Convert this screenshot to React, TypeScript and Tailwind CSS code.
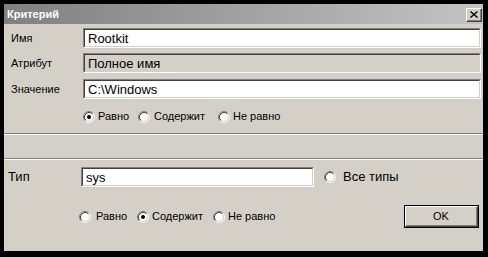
import React from "react";

const font = { fontFamily: '"Liberation Sans", Arial, sans-serif' };

function Radio({ checked }: { checked?: boolean }) {
  return (
    <svg width="12" height="12" viewBox="0 0 12 12" className="shrink-0">
      <circle cx="6" cy="6" r="4.5" fill="#fff" />
      <path d="M2.11 9.89 A5.5 5.5 0 0 1 9.89 2.11" stroke="#808080" strokeWidth="1" fill="none" />
      <path d="M9.89 2.11 A5.5 5.5 0 0 1 2.11 9.89" stroke="#ffffff" strokeWidth="1" fill="none" />
      <path d="M2.82 9.18 A4.5 4.5 0 0 1 9.18 2.82" stroke="#404040" strokeWidth="1" fill="none" />
      <path d="M9.18 2.82 A4.5 4.5 0 0 1 2.82 9.18" stroke="#d4d0c8" strokeWidth="1" fill="none" />
      {checked && <circle cx="6" cy="6" r="2" fill="#000" />}
    </svg>
  );
}

function Field({ value, gray, width }: { value: string; gray?: boolean; width: string }) {
  return (
    <div className={`${width} h-[20px] border-t border-l border-[#808080] border-b border-r border-b-white border-r-white`}>
      <div
        className={`h-full border-t border-l border-[#404040] border-b border-r border-b-[#d4d0c8] border-r-[#d4d0c8] ${gray ? "bg-[#d4d0c8]" : "bg-white"} flex items-center pl-[3px] text-[13px] text-black leading-none`}
      >
        {value}
      </div>
    </div>
  );
}

function Separator() {
  return (
    <div className="w-full">
      <div className="h-px bg-[#808080]" />
      <div className="h-px bg-white" />
    </div>
  );
}

export default function App() {
  return (
    <div className="w-[488px] h-[257px] bg-black pt-[4px] pl-[4px]" style={font}>
      <div className="w-[479px] h-[247px] bg-[#d4d0c8] flex flex-col">
        {/* Title bar */}
        <div className="h-[20px] bg-gradient-to-r from-[#808080] to-[#c4c4c4] flex items-center justify-between pl-[3px] pr-[1px]">
          <span className="text-white font-bold text-[11px] leading-none">Критерий</span>
          <div className="w-[16px] h-[14px] mt-[1px] border-t border-l border-white border-b border-r border-b-[#404040] border-r-[#404040]">
            <div className="w-full h-full bg-[#d4d0c8] border-b border-r border-[#808080] border-t-0 border-l-0 flex items-center justify-center">
              <svg width="8" height="7" viewBox="0 0 8 7">
                <path d="M0.5 0.5 L7.5 6.5 M7.5 0.5 L0.5 6.5" stroke="#000" strokeWidth="1.4" />
              </svg>
            </div>
          </div>
        </div>

        {/* Row 1 */}
        <div className="flex items-center mt-[4px] pl-[7px]">
          <div className="w-[72px] text-[11px] text-black">Имя</div>
          <Field value="Rootkit" width="w-[398px]" />
        </div>
        <div className="flex items-center mt-[5px] pl-[7px]">
          <div className="w-[72px] text-[11px] text-black">Атрибут</div>
          <Field value="Полное имя" gray width="w-[398px]" />
        </div>
        <div className="flex items-center mt-[6px] pl-[7px]">
          <div className="w-[72px] text-[11px] text-black">Значение</div>
          <Field value="C:\Windows" width="w-[398px]" />
        </div>

        {/* Radio row 1 */}
        <div className="flex items-center h-[13px] mt-[11px] pl-[79px] text-[11px] text-black">
          <div className="flex items-center gap-[3px] w-[55px]">
            <Radio checked />
            <span>Равно</span>
          </div>
          <div className="flex items-center gap-[4px] w-[80px]">
            <Radio />
            <span>Содержит</span>
          </div>
          <div className="flex items-center gap-[3px]">
            <Radio />
            <span>Не равно</span>
          </div>
        </div>

        <div className="mt-[10px]">
          <Separator />
        </div>
        <div className="mt-[23px]">
          <Separator />
        </div>

        {/* Type row */}
        <div className="flex items-center mt-[7px] pl-[4px]">
          <div className="w-[73px] text-[13px] text-black">Тип</div>
          <Field value="sys" width="w-[233px]" />
          <div className="flex items-center gap-[7px] ml-[10px] text-[13px] text-black">
            <Radio />
            <span>Все типы</span>
          </div>
        </div>

        {/* Bottom row */}
        <div className="flex items-center h-[23px] mt-[18px] pl-[75px] pr-[4px] text-[11px] text-black">
          <div className="flex items-center gap-[5px] w-[58px]">
            <Radio />
            <span>Равно</span>
          </div>
          <div className="flex items-center gap-[3px] w-[76px]">
            <Radio checked />
            <span>Содержит</span>
          </div>
          <div className="flex items-center gap-[3px]">
            <Radio />
            <span>Не равно</span>
          </div>
          <div className="ml-auto w-[75px] h-[23px] border border-black">
            <div className="w-full h-full border-t border-l border-white border-b border-r border-b-[#404040] border-r-[#404040]">
              <div className="w-full h-full border-b border-r border-[#808080] border-t-0 border-l-0 flex items-center justify-center text-[11px]">
                OK
              </div>
            </div>
          </div>
        </div>
      </div>
    </div>
  );
}
